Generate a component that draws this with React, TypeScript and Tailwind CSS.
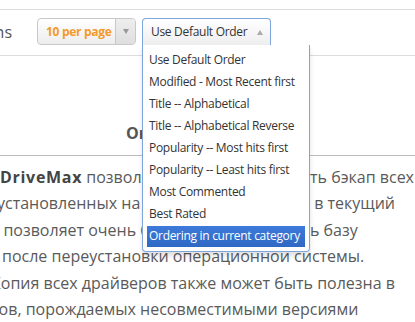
const orders = [
  "Use Default Order",
  "Modified - Most Recent first",
  "Title -- Alphabetical",
  "Title -- Alphabetical Reverse",
  "Popularity -- Most hits first",
  "Popularity -- Least hits first",
  "Most Commented",
  "Best Rated",
  "Ordering in current category",
];

export default function App() {
  const active = orders.length - 1;

  return (
    <div className="relative w-[415px] h-[322px] overflow-hidden bg-white text-[#555] font-['Open_Sans',sans-serif]">
      <div className="h-[9px]" />

      {/* toolbar */}
      <div className="flex items-start h-[47px] pt-[8px] border-t border-b border-[#dcdcdc]">
        <div className="flex items-center h-[27px] w-[37px] overflow-hidden">
          <span className="ml-[-47px] text-[16px] text-[#555] whitespace-nowrap">Options</span>
        </div>

        <div className="flex h-[27px] w-[99px] rounded-[4px] border border-[#c8c8c8] bg-gradient-to-b from-white to-[#ededed] overflow-hidden">
          <span className="flex-1 pl-[8px] leading-[25px] text-[12px] tracking-[-0.3px] font-bold text-[#f39a2b] whitespace-nowrap">
            10 per page
          </span>
          <span className="flex w-[20px] shrink-0 items-center justify-center border-l border-[#c8c8c8] bg-gradient-to-b from-[#eeeeee] to-[#dedede]">
            <span className="block w-0 h-0 border-l-[3.5px] border-r-[3.5px] border-t-[5px] border-l-transparent border-r-transparent border-t-[#999]" />
          </span>
        </div>

        <div className="relative ml-[6px]">
          <div className="flex items-center h-[27px] w-[129px] rounded-t-[4px] border border-b-0 border-[#7fa6dc] bg-gradient-to-b from-white to-[#eeeeee] pl-[8px] pr-[7px]">
            <span className="flex-1 text-[12px] tracking-[-0.3px] text-[#333] whitespace-nowrap">Use Default Order</span>
            <span className="block w-0 h-0 border-l-[3.5px] border-r-[3.5px] border-b-[5px] border-l-transparent border-r-transparent border-b-[#aaa]" />
          </div>

          <ul className="absolute top-[27px] left-0 z-10 w-[168px] border border-t-0 border-[#7fa6dc] rounded-b-[4px] bg-white p-[4px] shadow-[0_4px_5px_rgba(0,0,0,0.12)]">
            {orders.map((o, i) => (
              <li
                key={o}
                className={
                  i === active
                    ? "h-[21px] mt-[1px] leading-[20px] px-[2px] text-[12px] tracking-[-0.3px] text-white whitespace-nowrap bg-gradient-to-b from-[#3d7ad9] to-[#2f68c4]"
                    : "h-[22px] leading-[22px] px-[2px] text-[12px] tracking-[-0.3px] text-[#333] whitespace-nowrap"
                }
              >
                {o}
              </li>
            ))}
          </ul>
        </div>
      </div>

      {/* heading */}
      <div className="flex items-end h-[100px] pb-[10px] border-b border-[#bdbdbd]">
        <h3 className="pl-[126px] leading-[24px] text-[16px] font-bold text-[#555] whitespace-nowrap">
          Ordering
        </h3>
      </div>

      {/* description */}
      <div className="pt-[8px] text-[16px] leading-[26.4px] text-[#5a5a5a] whitespace-nowrap">
        <div className="flex">
          <span className="w-[310px] shrink-0 overflow-hidden">
            <b className="text-[#444] tracking-[0.7px]">DriveMax</b> позволяет сдела
          </span>
          <span>ть бэкап всех</span>
        </div>
        <div className="flex">
          <span className="w-[310px] shrink-0 overflow-hidden">
            <span className="ml-[-3px]">установленных на компьютере</span>
          </span>
          <span>&nbsp;в текущий</span>
        </div>
        <div className="flex">
          <span className="w-[310px] shrink-0 overflow-hidden">
            <span className="ml-[-28px]">Это позволяет очень быстро</span>
          </span>
          <span>ь базу</span>
        </div>
        <div className="ml-[2px]">после переустановки операционной системы.</div>
        <div className="ml-[-9px]">Копия всех драйверов также может быть полезна в</div>
        <div className="ml-[-76px]">конфликтов, порождаемых несовместимыми версиями</div>
      </div>
    </div>
  );
}
